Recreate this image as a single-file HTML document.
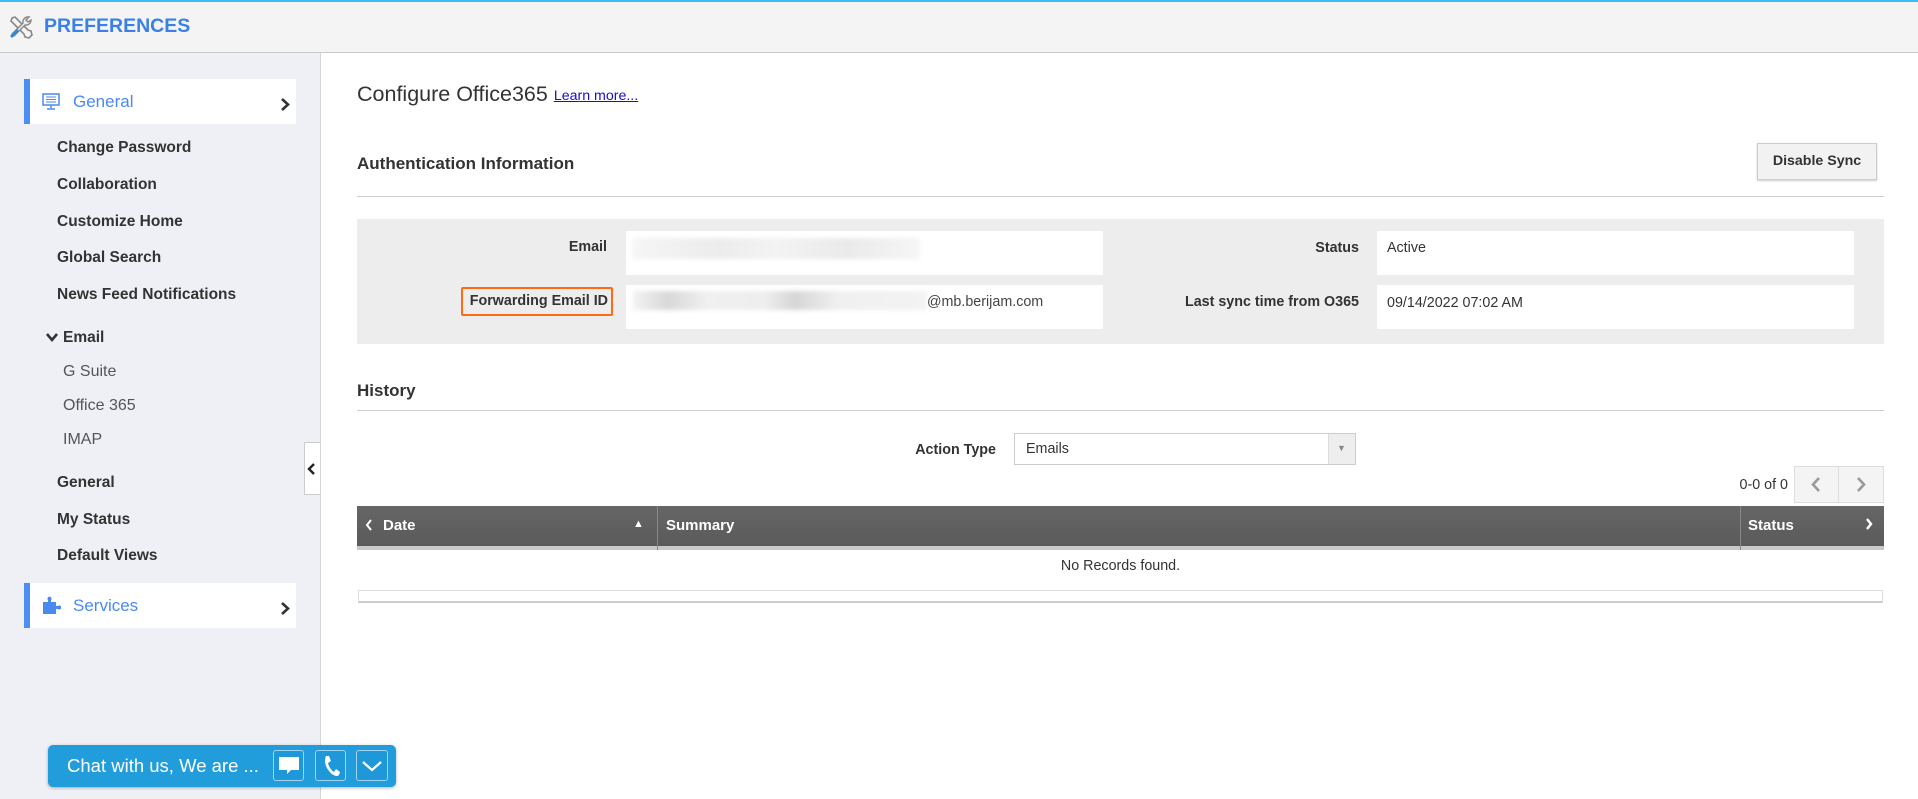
<!DOCTYPE html>
<html><head><meta charset="utf-8">
<style>
*{margin:0;padding:0;box-sizing:border-box}
body{width:1918px;height:799px;overflow:hidden;background:#fff;font-family:"Liberation Sans",Arial,sans-serif;position:relative;color:#333}
.a{position:absolute;white-space:nowrap}
.hdr{left:0;top:0;width:1918px;height:53px;background:#f4f4f4;border-top:2px solid #3cbcf0;border-bottom:1px solid #c8c8c8}
.side{left:0;top:53px;width:321px;height:746px;background:#eef0f5;border-right:1px solid #d6d6d6}
.nav{font-weight:bold;font-size:15.5px;color:#333;line-height:20px}
.sub{font-size:16px;color:#555;line-height:20px}
.box{background:#fff;border-left:6px solid #4d8ef5}
.lbl{font-weight:bold;font-size:14.3px;color:#333;line-height:16px;text-align:right}
.val{background:#fff}
.th{color:#fff;font-weight:bold;font-size:15px;line-height:18px}
.t{font-size:14.3px;color:#333;line-height:16px}
</style></head><body>
<div class="a hdr"></div>
<svg class="a" style="left:8px;top:14px" width="26" height="26" viewBox="0 0 26 26">
<path d="M4 4 L7 3 L20 16 L23 17 L24 21 L21 24 L17 23 L16 20 L3 7 Z" fill="none" stroke="#888" stroke-width="1.6"/>
<path d="M20 3 a5 5 0 0 0 -5 6 L4 20 L6 22 L17 11 a5 5 0 0 0 6 -5 L20 8 L18 6 L21 3 Z" fill="#eee" stroke="#888" stroke-width="1.4"/>
<path d="M2 22 L9 15 L11 17 L4 24 Z" fill="#2a8bd6"/>
</svg>
<div class="a" style="left:44px;top:14px;font-size:19.5px;font-weight:bold;color:#3a80e6;line-height:24px">PREFERENCES</div>

<div class="a side"></div>
<div class="a box" style="left:24px;top:79px;width:272px;height:45px"></div>
<svg class="a" style="left:42px;top:93px" width="18" height="17" viewBox="0 0 18 17"><rect x="1" y="1" width="16" height="11" fill="none" stroke="#4a8af0" stroke-width="1.5"/><path d="M4 4h10M4 6.5h10M4 9h10" stroke="#4a8af0" stroke-width="1"/><path d="M9 12v3M5 16h8" stroke="#4a8af0" stroke-width="1.5"/></svg>
<div class="a" style="left:73px;top:92px;font-size:17px;color:#4a8af0;line-height:20px">General</div>
<svg class="a" style="left:280px;top:97px" width="10" height="15" viewBox="0 0 10 15"><path d="M2 2 L8 7.5 L2 13" fill="none" stroke="#333" stroke-width="2.6"/></svg>

<div class="a nav" style="left:57px;top:138px">Change Password</div>
<div class="a nav" style="left:57px;top:175px">Collaboration</div>
<div class="a nav" style="left:57px;top:212px">Customize Home</div>
<div class="a nav" style="left:57px;top:248px">Global Search</div>
<div class="a nav" style="left:57px;top:285px">News Feed Notifications</div>
<svg class="a" style="left:45px;top:332px" width="14" height="11" viewBox="0 0 14 11"><path d="M2 2 L7 8 L12 2" fill="none" stroke="#333" stroke-width="2.6"/></svg>
<div class="a nav" style="left:63px;top:328px">Email</div>
<div class="a sub" style="left:63px;top:362px">G Suite</div>
<div class="a sub" style="left:63px;top:396px">Office 365</div>
<div class="a sub" style="left:63px;top:430px">IMAP</div>
<div class="a nav" style="left:57px;top:473px">General</div>
<div class="a nav" style="left:57px;top:510px">My Status</div>
<div class="a nav" style="left:57px;top:546px">Default Views</div>

<div class="a box" style="left:24px;top:583px;width:272px;height:45px"></div>
<svg class="a" style="left:42px;top:596px" width="19" height="18" viewBox="0 0 19 18"><path d="M1 6h5V4a2 2 0 1 1 3 0v2h5v4h2a2 2 0 1 1 0 3h-2v5H1z" fill="#4a8af0"/></svg>
<div class="a" style="left:73px;top:596px;font-size:17px;color:#4a8af0;line-height:20px">Services</div>
<svg class="a" style="left:280px;top:601px" width="10" height="15" viewBox="0 0 10 15"><path d="M2 2 L8 7.5 L2 13" fill="none" stroke="#333" stroke-width="2.6"/></svg>

<div class="a" style="left:304px;top:442px;width:16px;height:53px;background:#fff;border:1px solid #ccc;border-right:none"></div>
<svg class="a" style="left:306px;top:462px" width="10" height="14" viewBox="0 0 10 14"><path d="M8 2 L3 7 L8 12" fill="none" stroke="#222" stroke-width="2.4"/></svg>

<!-- main -->
<div class="a" style="left:357px;top:81px;font-size:21.5px;color:#333;line-height:26px">Configure Office365 <span style="font-size:14.2px;color:#1a0dcc;text-decoration:underline;vertical-align:1px">Learn more...</span></div>
<div class="a" style="left:357px;top:153px;font-size:17px;font-weight:bold;color:#333;line-height:22px">Authentication Information</div>
<div class="a" style="left:1757px;top:143px;width:120px;height:37px;background:#f2f2f2;border:1px solid #ccc;box-shadow:0 1px 2px rgba(0,0,0,.2);font-weight:bold;font-size:14.2px;line-height:35px;text-align:center;color:#333">Disable Sync</div>
<div class="a" style="left:357px;top:196px;width:1527px;height:1px;background:#ccc"></div>
<div class="a" style="left:357px;top:219px;width:1527px;height:125px;background:#ededed"></div>
<div class="a lbl" style="left:440px;top:239px;width:167px">Email</div>
<div class="a val" style="left:626px;top:231px;width:477px;height:44px"></div>
<div class="a" style="left:632px;top:238px;width:288px;height:21px;background:linear-gradient(90deg,#f6f6f6,#ececec 30%,#f3f3f3 50%,#eaeaea 75%,#f6f6f6);filter:blur(2px)"></div>
<div class="a" style="left:461px;top:287px;width:152px;height:29px;border:2px solid #ff6a13;border-radius:2px"></div>
<div class="a lbl" style="left:440px;top:293px;width:168px">Forwarding Email ID</div>
<div class="a val" style="left:626px;top:285px;width:477px;height:44px"></div>
<div class="a" style="left:633px;top:291px;width:294px;height:19px;background:linear-gradient(90deg,#f3f3f3,#d8d8d8 12%,#f0f0f0 25%,#eee 45%,#d6d6d6 55%,#f0f0f0 70%,#f3f3f3);filter:blur(2px)"></div>
<div class="a t" style="left:927px;top:294px;color:#444">@mb.berijam.com</div>
<div class="a lbl" style="left:1150px;top:240px;width:209px">Status</div>
<div class="a val" style="left:1377px;top:231px;width:477px;height:44px"></div>
<div class="a t" style="left:1387px;top:240px">Active</div>
<div class="a lbl" style="left:1150px;top:294px;width:209px">Last sync time from O365</div>
<div class="a val" style="left:1377px;top:285px;width:477px;height:44px"></div>
<div class="a t" style="left:1387px;top:295px">09/14/2022 07:02 AM</div>

<div class="a" style="left:357px;top:380px;font-size:17px;font-weight:bold;color:#333;line-height:22px">History</div>
<div class="a" style="left:357px;top:410px;width:1527px;height:1px;background:#ccc"></div>
<div class="a lbl" style="left:850px;top:442px;width:146px">Action Type</div>
<div class="a t" style="left:1014px;top:433px;width:342px;height:32px;border:1px solid #ccc;background:#fff;line-height:30px;padding-left:11px">Emails</div>
<div class="a" style="left:1328px;top:434px;width:27px;height:30px;background:#eee;border-left:1px solid #ddd"></div>
<div class="a" style="left:1337px;top:443px;font-size:9px;color:#888">▼</div>
<div class="a t" style="left:1688px;top:477px;width:100px;text-align:right">0-0 of 0</div>
<div class="a" style="left:1794px;top:466px;width:90px;height:37px;background:#f4f4f4;border:1px solid #ddd"></div>
<div class="a" style="left:1838px;top:467px;width:1px;height:35px;background:#ddd"></div>
<svg class="a" style="left:1810px;top:476px" width="12" height="17" viewBox="0 0 12 17"><path d="M9 2 L3 8.5 L9 15" fill="none" stroke="#999" stroke-width="2.6"/></svg>
<svg class="a" style="left:1855px;top:476px" width="12" height="17" viewBox="0 0 12 17"><path d="M3 2 L9 8.5 L3 15" fill="none" stroke="#999" stroke-width="2.6"/></svg>

<div class="a" style="left:357px;top:506px;width:1527px;height:40px;background:linear-gradient(#666,#5a5a5a)"></div>
<div class="a" style="left:357px;top:546px;width:1527px;height:4px;background:#c8c8c8"></div>
<div class="a" style="left:657px;top:506px;width:1px;height:44px;background:#888"></div>
<div class="a" style="left:1740px;top:506px;width:1px;height:44px;background:#888"></div>
<svg class="a" style="left:364px;top:518px" width="10" height="14" viewBox="0 0 10 14"><path d="M7 2 L3 7 L7 12" fill="none" stroke="#fff" stroke-width="2"/></svg>
<div class="a th" style="left:383px;top:517px">Date</div>
<div class="a" style="left:633px;top:518px;font-size:11px;color:#fff">▲</div>
<div class="a th" style="left:666px;top:517px">Summary</div>
<div class="a th" style="left:1748px;top:517px">Status</div>
<svg class="a" style="left:1864px;top:517px" width="10" height="14" viewBox="0 0 10 14"><path d="M3 2 L7 7 L3 12" fill="none" stroke="#fff" stroke-width="2.4"/></svg>
<div class="a t" style="left:357px;top:558px;width:1527px;text-align:center">No Records found.</div>
<div class="a" style="left:358px;top:590px;width:1525px;height:13px;border:1px solid #ddd;border-bottom:2px solid #ccc"></div>

<!-- chat -->
<div class="a" style="left:48px;top:745px;width:348px;height:42px;background:#229ddc;border-radius:5px;box-shadow:0 1px 3px rgba(0,0,0,.3)"></div>
<div class="a" style="left:67px;top:755px;font-size:18.5px;color:#fff;line-height:22px">Chat with us, We are ...</div>
<div class="a" style="left:273px;top:750px;width:31px;height:31px;border:1px solid #9fd3f0;border-radius:3px;background:#1f98da"></div>
<div class="a" style="left:315px;top:750px;width:31px;height:31px;border:1px solid #9fd3f0;border-radius:3px;background:#1f98da"></div>
<div class="a" style="left:356px;top:750px;width:32px;height:31px;border:1px solid #9fd3f0;border-radius:3px;background:#1f98da"></div>
<svg class="a" style="left:278px;top:756px" width="22" height="20" viewBox="0 0 22 20"><path d="M1 1h20v13H13l-4 4v-4H1z" fill="#fff"/></svg>
<svg class="a" style="left:321px;top:754px" width="20" height="24" viewBox="0 0 20 24"><path d="M5 2 L8 2 L10 7 L7 9 C8 13 10 16 13 18 L15 15 L19 18 L18 21 C16 23 12 22 8 17 C4 12 3 7 5 2 Z" fill="#fff"/></svg>
<svg class="a" style="left:361px;top:759px" width="22" height="14" viewBox="0 0 22 14"><path d="M2 3 L11 11 L20 3" fill="none" stroke="#fff" stroke-width="2.2"/></svg>
</body></html>
